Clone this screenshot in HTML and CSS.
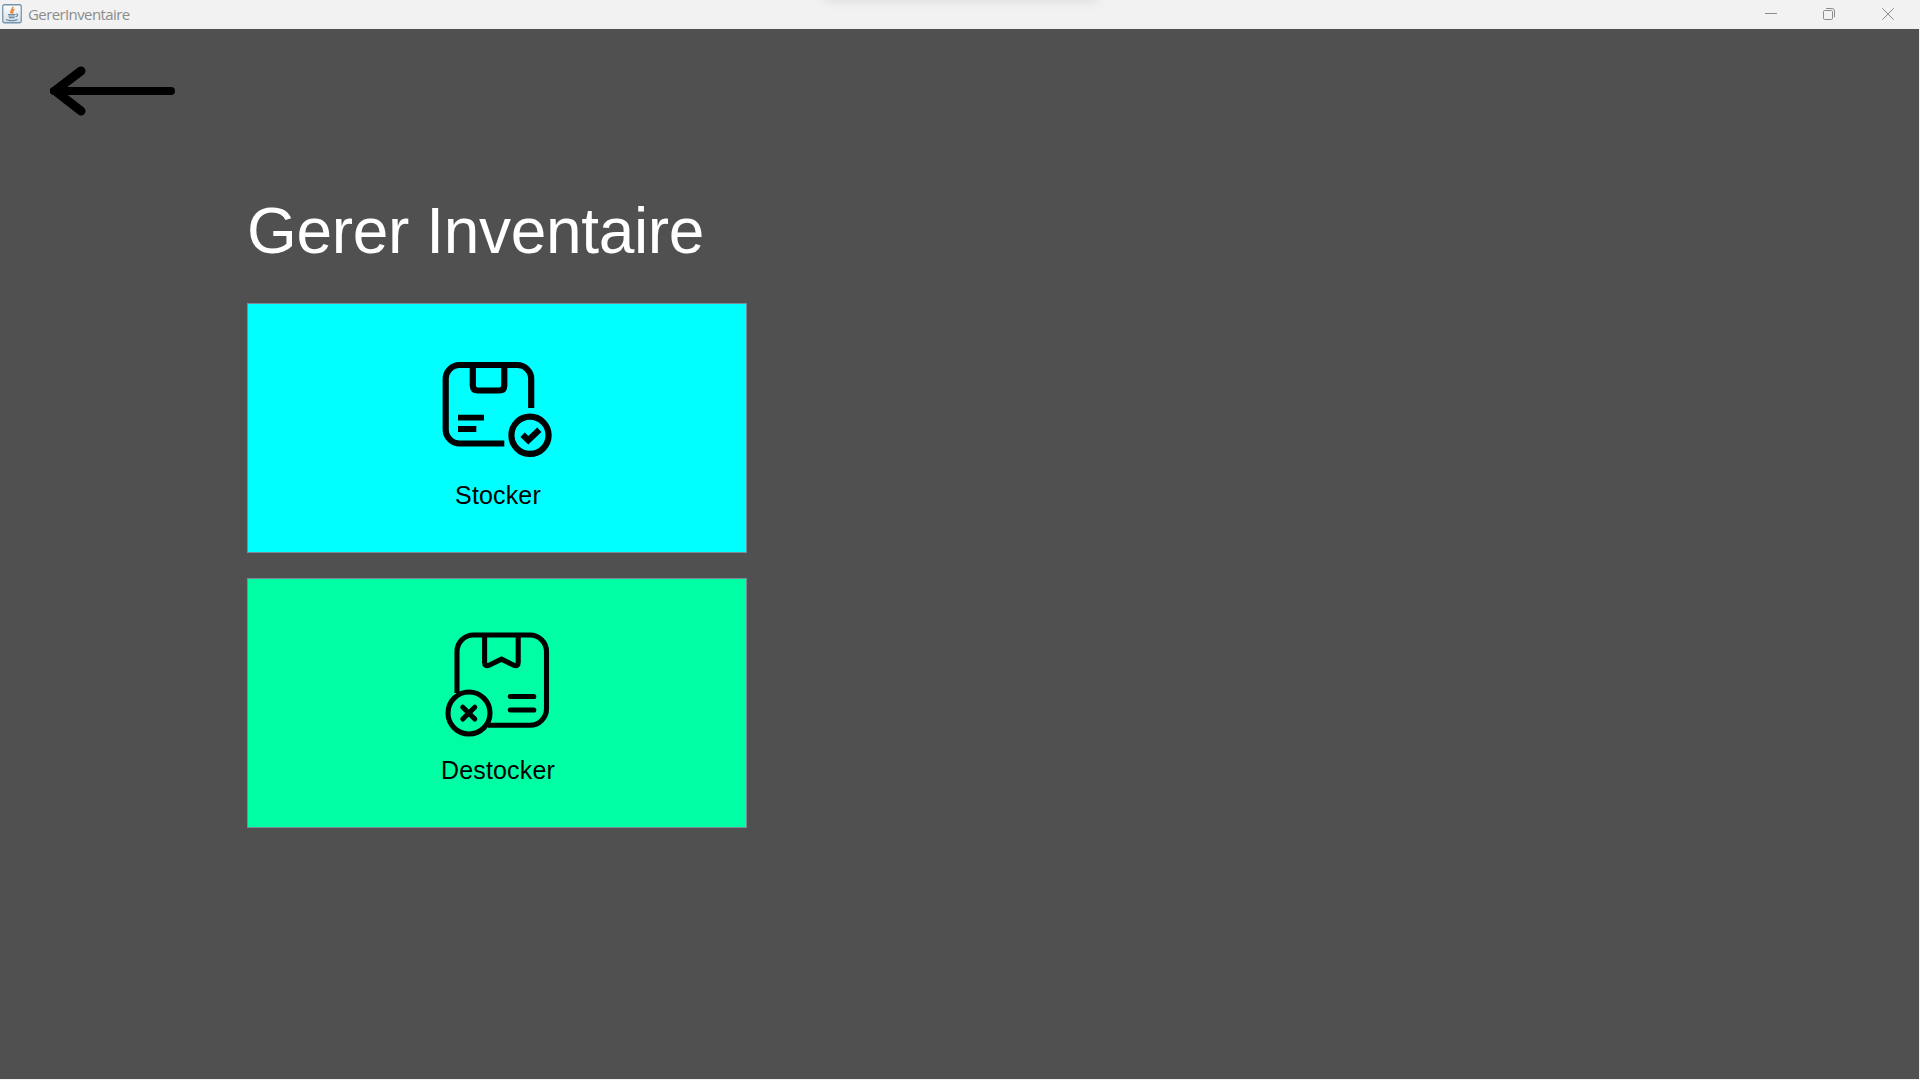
FILE: index.html
```html
<!DOCTYPE html>
<html lang="fr">
<head>
<meta charset="utf-8">
<title>GererInventaire</title>
<link rel="stylesheet" href="styles.css">
</head>
<body>
<header class="titlebar">
  <svg class="app-icon" width="20" height="20" viewBox="0 0 20 20">
    <defs><linearGradient id="tile" x1="0" y1="0" x2="0" y2="1"><stop offset="0" stop-color="#fff"/><stop offset="1" stop-color="#d5dde4"/></linearGradient></defs>
    <rect x=".75" y=".75" width="18.5" height="18" rx="1.5" fill="url(#tile)" stroke="#7494ad" stroke-width="1.3"/>
    <path d="M10.5 2.800C12 5 7.500 6 9.500 9.500M12.500 5.500C10 6.500 10 7.500 11 9.500" fill="none" stroke="#e8893a" stroke-width="1.700"/>
    <path d="M6 10.500h7.500M6.300 12h6.700M7 13.600h5.500M4 15.500c3 1.500 9 1.500 11.500 0M14 10c2.500-.5 2 2.500-.5 2.800" fill="none" stroke="#6d8ba7" stroke-width="1.100"/>
  </svg>
  <span class="caption">GererInventaire</span>
  <div class="controls">
    <svg width="12" height="12" viewBox="0 0 12 12"><path d="M0 5.500h12"/></svg>
    <svg class="restore" width="12" height="12" viewBox="0 0 12 12"><rect x=".5" y="2.500" width="9" height="9" rx="1.200"/><path d="M3 .5h6a2.500 2.500 0 0 1 2.500 2.500v6.200"/></svg>
    <svg width="12" height="12" viewBox="0 0 12 12"><path d="M.3.300l11.400 11.400M11.700.300L.3 11.700"/></svg>
  </div>
</header>
<main class="panel">
  <svg class="back" width="126" height="50" viewBox="0 0 126 50">
    <path d="M4 25H121"/>
    <path d="M31 4.900L5 24.800L31 45" stroke-width="9"/>
  </svg>
  <section class="menu">
    <h1 class="title">Gerer Inventaire</h1>
    <button class="tile stock">
      <svg class="glyph" width="134" height="110" viewBox="0 0 134 110">
        <g stroke-width="6.200">
          <path d="M101.200 58V29a14 14 0 0 0-14-14H29.700a14 14 0 0 0-14 14V79.500a14 14 0 0 0 14 14H74.300"/>
          <path d="M42.800 15V35.500q0 5 5 5H69.300q5 0 5-5V15"/>
          <path d="M28 67.600H54M28 79H46.300" stroke-width="5.800"/>
          <circle cx="100" cy="85.300" r="18.600"/>
          <path d="M92.600 84.800L98.300 90.200L109.300 79.800"/>
        </g>
      </svg>
      <span>Stocker</span>
    </button>
    <button class="tile unstock">
      <svg class="glyph" width="134" height="118" viewBox="0 0 134 118">
        <g stroke-width="5.100">
          <path d="M27 73V31.500a16.500 16.500 0 0 1 16.500-16.500H100a16.500 16.500 0 0 1 16.500 16.500V88.800a16.500 16.500 0 0 1-16.500 16.500H58"/>
          <path d="M54.600 15V42.500q0 4.500 4.500 2.700L71.500 39.200L83.700 45.200q4.500 1.800 4.500-2.700V15"/>
          <path d="M80.200 76.500H103.800M80.200 90H103.800" stroke-linecap="round"/>
          <circle cx="39" cy="93" r="21"/>
          <path d="M32.800 87.200L44.800 99M44.800 87.200L32.800 99" stroke-linecap="round"/>
        </g>
      </svg>
      <span>Destocker</span>
    </button>
  </section>
</main>
</body>
</html>
```
FILE: styles.css
```css
* { box-sizing: border-box; }
body {
  margin: 0;
  height: 1080px;
  overflow: hidden;
  display: flex;
  flex-direction: column;
  background: #f2f2f2;
  font-family: "Liberation Sans", Arial, sans-serif;
}
.titlebar {
  position: relative;
  height: 29px;
  flex: none;
  display: flex;
  align-items: flex-start;
  padding: 4px 26px 0 2px;
  overflow: hidden;
}
/* shadow of the panel hanging above the window's top edge */
.titlebar::before {
  content: "";
  position: absolute;
  top: -20px;
  left: 826px;
  width: 270px;
  height: 18px;
  box-shadow: 0 0 14px 1px rgba(0, 0, 0, 0.13);
}
.caption {
  margin-left: 6px;
  font: 15px/21px "Open Sans", "Noto Sans", sans-serif;
  letter-spacing: -0.6px;
  color: #8c8c8c;
}
.controls {
  margin: 4px 0 0 auto;
  display: flex;
  gap: 46px;
  fill: none;
  stroke: #8c8c8c;
}
.controls svg { display: block; }
.controls .restore { margin-right: 1px; }
.panel {
  height: 1050px;
  margin-right: 1px;
  background: #505050;
}
.back {
  display: block;
  margin-left: 50px;
  position: relative;
  top: 37px;
  fill: none;
  stroke: #000;
  stroke-width: 8;
  stroke-linecap: round;
}
.menu {
  width: 500px;
  margin: 114px 0 0 247px;
  display: flex;
  flex-direction: column;
}
.title {
  margin: 0 0 35px;
  padding-top: 1px;
  height: 75px;
  font-size: 64px;
  font-weight: 400;
  line-height: 74px;
  letter-spacing: -0.34px;
  white-space: nowrap;
  color: #fff;
}
.tile {
  height: 250px;
  border: 1px solid #7a8a99;
  display: flex;
  flex-direction: column;
  align-items: center;
  justify-content: flex-start;
  font: 25px/28px "Liberation Sans", Arial, sans-serif;
  letter-spacing: 0.15px;
  color: #000;
}
.tile.stock { padding: 46px 0 0; background: #00ffff; }
.tile.unstock { margin-top: 25px; padding: 41px 0 0; background: #00ffa5; }
.glyph { flex: none; fill: none; stroke: #000; }
.tile span { padding-left: 2px; }
.stock span { margin-top: 21px; }
.unstock span { margin-top: 18px; }
```
